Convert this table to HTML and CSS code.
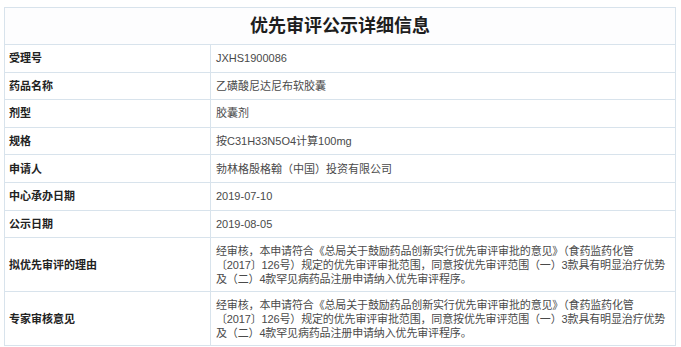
FILE: index.html
```html
<!DOCTYPE html>
<html lang="zh-CN">
<head>
<meta charset="utf-8">
<title>优先审评公示详细信息</title>
<link rel="stylesheet" href="styles.css">
</head>
<body>
<table class="info">
  <colgroup><col class="col-label"><col class="col-value"></colgroup>
  <tr><th class="title" colspan="2">优先审评公示详细信息</th></tr>
  <tr><td class="label">受理号</td><td class="value">JXHS1900086</td></tr>
  <tr><td class="label">药品名称</td><td class="value">乙磺酸尼达尼布软胶囊</td></tr>
  <tr><td class="label">剂型</td><td class="value">胶囊剂</td></tr>
  <tr><td class="label">规格</td><td class="value">按C31H33N5O4计算100mg</td></tr>
  <tr><td class="label">申请人</td><td class="value">勃林格殷格翰（中国）投资有限公司</td></tr>
  <tr><td class="label">中心承办日期</td><td class="value">2019-07-10</td></tr>
  <tr><td class="label">公示日期</td><td class="value">2019-08-05</td></tr>
  <tr class="multi"><td class="label">拟优先审评的理由</td><td class="value">经审核，本申请符合《总局关于鼓励药品创新实行优先审评审批的意见》（食药监药化管<br>〔2017〕126号）规定的优先审评审批范围，同意按优先审评范围（一）3款具有明显治疗优势<br>及（二）4款罕见病药品注册申请纳入优先审评程序。</td></tr>
  <tr class="multi"><td class="label">专家审核意见</td><td class="value">经审核，本申请符合《总局关于鼓励药品创新实行优先审评审批的意见》（食药监药化管<br>〔2017〕126号）规定的优先审评审批范围，同意按优先审评范围（一）3款具有明显治疗优势<br>及（二）4款罕见病药品注册申请纳入优先审评程序。</td></tr>
</table>
</body>
</html>
```
FILE: styles.css
```css
html, body {
  margin: 0;
  padding: 0;
  background: #ffffff;
}

body {
  padding: 7px 5px 0 4px;
  font-family: "Liberation Sans", "Noto Sans CJK SC", sans-serif;
  font-size: 11px;
}

.info {
  width: 672px;
  border-collapse: collapse;
  table-layout: fixed;
  border: 1px solid #d3dee8;
}

.col-label {
  width: 206px;
}

.info th,
.info td {
  border: 1px solid #d8e3ec;
  text-align: left;
  vertical-align: middle;
  line-height: 14px;
  padding: 6.3px 5px;
}

.info .title {
  text-align: center;
  font-size: 18px;
  font-weight: bold;
  color: #1e1e1e;
  line-height: 24px;
  padding: 6px 5px;
  background: #fdfdfe;
}

.info .label {
  padding-left: 4px;
  font-weight: bold;
  color: #222222;
}

.info .value {
  color: #4a4a4a;
  padding-right: 0;
}

.info .multi td {
  padding-top: 5.5px;
  padding-bottom: 5.5px;
}

.info .multi .value {
  letter-spacing: -0.15px;
}
```
